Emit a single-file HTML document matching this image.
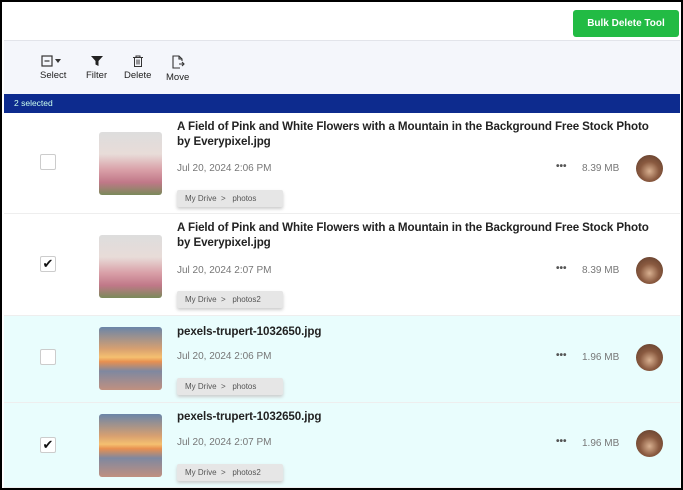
<!DOCTYPE html><html><head><style>
*{margin:0;padding:0;box-sizing:border-box}
body{width:683px;height:490px;background:#000;font-family:"Liberation Sans",sans-serif;position:relative;overflow:hidden}
.page{position:absolute;left:2px;top:2px;width:679px;height:486px;background:#fff}
.btn{position:absolute;left:571px;top:8px;width:106px;height:27px;background:#22bb44;border-radius:3px;color:#fff;font-size:10px;font-weight:bold;text-align:center;line-height:27px}
.tb{position:absolute;left:2px;top:38px;width:676px;height:54px;background:#f4f6fb;border-top:1px solid #e2e4ea}
.tool{position:absolute;top:14px;font-size:9.5px;color:#222;text-align:center}
.bar{position:absolute;left:2px;top:92px;width:676px;height:19px;background:#0d2b8e;color:#cfe;font-size:8.5px;line-height:19px;padding-left:10px}
.row{position:absolute;left:2px;width:676px;border-bottom:1px solid #eee}
.cb{position:absolute;left:36px;width:16px;height:16px;border:1px solid #ccc;border-radius:2px;background:#fff;font-size:13px;line-height:14px;text-align:center;color:#111}
.th{position:absolute;left:95px;width:63px;height:63px;border-radius:3px}
.pink{background:linear-gradient(#ddd 0%,#e8dcd8 35%,#d9a0a8 60%,#c07888 80%,#7a8a5a 100%)}
.sun{background:linear-gradient(#6a85a8 0%,#d8a070 35%,#f5c070 48%,#e89050 55%,#7f88a0 70%,#c09080 100%)}
.title{position:absolute;left:173px;width:478px;font-size:11.6px;font-weight:bold;color:#222;line-height:15px;letter-spacing:-0.1px}
.date{position:absolute;left:173px;font-size:10px;color:#777}
.path{position:absolute;left:173px;width:106px;height:17px;background:#e6e6e6;font-size:8px;color:#555;line-height:17px;padding:0 8px;border-radius:2px;box-shadow:0 2px 3px #ccc}
.dots{position:absolute;left:552px;font-size:10px;color:#555;font-weight:bold}
.size{position:absolute;left:578px;font-size:10px;color:#777}
.av{position:absolute;left:632px;width:27px;height:27px;border-radius:50%;background:radial-gradient(circle at 50% 60%,#d8b090 0%,#8a5a40 45%,#5a3a2a 100%)}
</style></head><body><div class="page">
<div class="btn">Bulk Delete Tool</div>
<div class="tb">
<div class="tool" style="left:36px"><svg width="24" height="12"><rect x="1" y="1" width="10" height="10" fill="none" stroke="#333" stroke-width="1.2"/><line x1="3.5" y1="6" x2="8.5" y2="6" stroke="#333" stroke-width="1.2"/><path d="M14 4h6l-3 4z" fill="#333"/></svg><br>Select</div>
<div class="tool" style="left:82px"><svg width="14" height="12"><path d="M1 1h12l-4.5 5v5l-3-1.5v-3.5z" fill="#222"/></svg><br>Filter</div>
<div class="tool" style="left:120px"><svg width="12" height="12"><path d="M1 2.5h10M4 2.5V1h4v1.5M2.5 2.5v9h7v-9M5 4.5v5M7 4.5v5" fill="none" stroke="#333"/></svg><br>Delete</div>
<div class="tool" style="left:162px"><svg width="14" height="14"><path d="M9 13H2V1h6l3 3v2M8 1v3h3M8 9h5M11 7l2 2-2 2" fill="none" stroke="#333" stroke-width="1.1"/></svg><br>Move</div>
</div>
<div class="bar">2 selected</div>

<div class="row" style="top:111px;height:101px">
<div class="cb" style="top:41px"></div><div class="th pink" style="top:19px"></div>
<div class="title" style="top:6px">A Field of Pink and White Flowers with a Mountain in the Background Free Stock Photo by Everypixel.jpg</div>
<div class="date" style="top:50px">Jul 20, 2024 2:06 PM</div>
<div class="path" style="top:77px">My Drive &nbsp;&gt;&nbsp;&nbsp; photos</div>
<div class="dots" style="top:48px">•••</div><div class="size" style="top:50px">8.39 MB</div><div class="av" style="top:42px"></div>
</div>
<div class="row" style="top:212px;height:102px">
<div class="cb" style="top:42px">✔</div><div class="th pink" style="top:21px"></div>
<div class="title" style="top:6px">A Field of Pink and White Flowers with a Mountain in the Background Free Stock Photo by Everypixel.jpg</div>
<div class="date" style="top:51px">Jul 20, 2024 2:07 PM</div>
<div class="path" style="top:77px">My Drive &nbsp;&gt;&nbsp;&nbsp; photos2</div>
<div class="dots" style="top:49px">•••</div><div class="size" style="top:51px">8.39 MB</div><div class="av" style="top:43px"></div>
</div>
<div class="row" style="top:314px;height:87px;background:#e9fdfd">
<div class="cb" style="top:33px"></div><div class="th sun" style="top:11px"></div>
<div class="title" style="top:8px">pexels-trupert-1032650.jpg</div>
<div class="date" style="top:35px">Jul 20, 2024 2:06 PM</div>
<div class="path" style="top:62px">My Drive &nbsp;&gt;&nbsp;&nbsp; photos</div>
<div class="dots" style="top:34px">•••</div><div class="size" style="top:36px">1.96 MB</div><div class="av" style="top:28px"></div>
</div>
<div class="row" style="top:401px;height:85px;background:#e9fdfd">
<div class="cb" style="top:34px">✔</div><div class="th sun" style="top:11px"></div>
<div class="title" style="top:6px">pexels-trupert-1032650.jpg</div>
<div class="date" style="top:34px">Jul 20, 2024 2:07 PM</div>
<div class="path" style="top:61px">My Drive &nbsp;&gt;&nbsp;&nbsp; photos2</div>
<div class="dots" style="top:33px">•••</div><div class="size" style="top:35px">1.96 MB</div><div class="av" style="top:27px"></div>
</div>
</div></body></html>
